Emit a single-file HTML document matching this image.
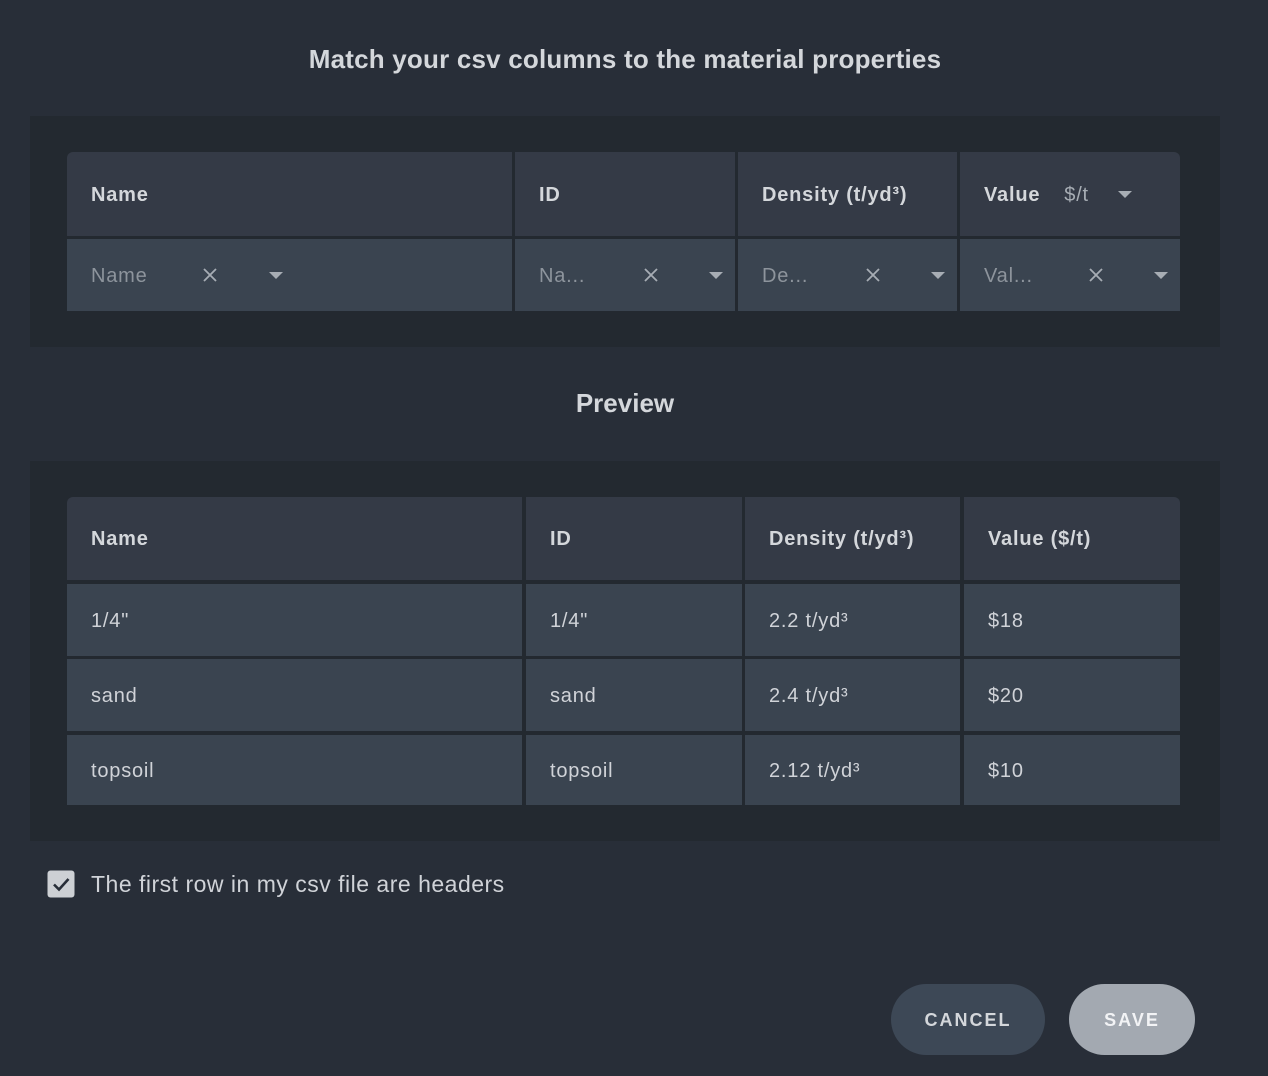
<!DOCTYPE html>
<html><head><meta charset="utf-8"><style>
*{margin:0;padding:0;box-sizing:border-box}
body{width:1268px;height:1076px;background:#282e38;font-family:"Liberation Sans",sans-serif;color:#d4d7db;position:relative;overflow:hidden}
.a{position:absolute}
.panel{position:absolute;left:30px;width:1190px;background:#232930}
.h{background:#343a46;font-weight:bold;font-size:20px;letter-spacing:.8px;color:#d4d7db;display:flex;align-items:center;padding-left:24px;padding-top:2px}
.c{background:#3a4450;font-size:20px;color:#d0d3d8;display:flex;align-items:center;padding-left:24px;letter-spacing:.8px;padding-top:2px}
.ph{color:#8d949c}
.x{position:absolute;width:16px;height:16px}
.tri{position:absolute;width:0;height:0;border-left:7px solid transparent;border-right:7px solid transparent;border-top:7px solid #a7adb4}
</style></head><body>
<div class="a" style="left:0;width:1250px;top:44px;text-align:center;font-size:26px;font-weight:bold;color:#d4d7db;letter-spacing:.2px">Match your csv columns to the material properties</div>
<div class="panel" style="top:116px;height:231px"></div>
<div class="a h" style="left:67px;top:152px;width:445px;height:84px;border-top-left-radius:6px">Name</div>
<div class="a h" style="left:515px;top:152px;width:220px;height:84px">ID</div>
<div class="a h" style="left:738px;top:152px;width:219px;height:84px">Density (t/yd³)</div>
<div class="a h" style="left:960px;top:152px;width:220px;height:84px;border-top-right-radius:6px">Value<span style="font-weight:normal;color:#a7adb4;margin-left:24px">$/t</span></div>
<div class="tri" style="left:1118px;top:191px"></div>
<div class="a c ph" style="left:67px;top:239px;width:445px;height:72px">Name</div>
<div class="a c ph" style="left:515px;top:239px;width:220px;height:72px">Na...</div>
<div class="a c ph" style="left:738px;top:239px;width:219px;height:72px">De...</div>
<div class="a c ph" style="left:960px;top:239px;width:220px;height:72px">Val...</div>
<svg class="x" style="left:202px;top:267px" viewBox="0 0 16 16"><path d="M2 2L14 14M14 2L2 14" stroke="#a7adb4" stroke-width="1.8"/></svg>
<svg class="x" style="left:643px;top:267px" viewBox="0 0 16 16"><path d="M2 2L14 14M14 2L2 14" stroke="#a7adb4" stroke-width="1.8"/></svg>
<svg class="x" style="left:865px;top:267px" viewBox="0 0 16 16"><path d="M2 2L14 14M14 2L2 14" stroke="#a7adb4" stroke-width="1.8"/></svg>
<svg class="x" style="left:1088px;top:267px" viewBox="0 0 16 16"><path d="M2 2L14 14M14 2L2 14" stroke="#a7adb4" stroke-width="1.8"/></svg>
<div class="tri" style="left:269px;top:272px"></div>
<div class="tri" style="left:709px;top:272px"></div>
<div class="tri" style="left:931px;top:272px"></div>
<div class="tri" style="left:1154px;top:272px"></div>

<div class="a" style="left:0;width:1250px;top:388px;text-align:center;font-size:26px;font-weight:bold;color:#d4d7db">Preview</div>
<div class="panel" style="top:461px;height:380px"></div>
<div class="a h" style="left:67px;top:497px;width:455px;height:83px;border-top-left-radius:6px">Name</div>
<div class="a h" style="left:526px;top:497px;width:216px;height:83px">ID</div>
<div class="a h" style="left:745px;top:497px;width:215px;height:83px">Density (t/yd³)</div>
<div class="a h" style="left:964px;top:497px;width:216px;height:83px;border-top-right-radius:6px">Value ($/t)</div>

<div class="a c" style="left:67px;top:584px;width:455px;height:72px">1/4"</div>
<div class="a c" style="left:526px;top:584px;width:216px;height:72px">1/4"</div>
<div class="a c" style="left:745px;top:584px;width:215px;height:72px">2.2 t/yd³</div>
<div class="a c" style="left:964px;top:584px;width:216px;height:72px">$18</div>
<div class="a c" style="left:67px;top:659px;width:455px;height:72px">sand</div>
<div class="a c" style="left:526px;top:659px;width:216px;height:72px">sand</div>
<div class="a c" style="left:745px;top:659px;width:215px;height:72px">2.4 t/yd³</div>
<div class="a c" style="left:964px;top:659px;width:216px;height:72px">$20</div>
<div class="a c" style="left:67px;top:735px;width:455px;height:70px">topsoil</div>
<div class="a c" style="left:526px;top:735px;width:216px;height:70px">topsoil</div>
<div class="a c" style="left:745px;top:735px;width:215px;height:70px">2.12 t/yd³</div>
<div class="a c" style="left:964px;top:735px;width:216px;height:70px">$10</div>

<svg class="a" style="left:47px;top:870px" width="28" height="28" viewBox="0 0 28 28"><rect x="0.5" y="0.5" width="27" height="27" rx="3" fill="#cdd0d4"/><path d="M7 14.5L12 19.5L21.5 9" stroke="#282e38" stroke-width="2.6" fill="none"/></svg>
<div class="a" style="left:91px;top:871px;font-size:23px;color:#d0d3d8;letter-spacing:.5px">The first row in my csv file are headers</div>

<div class="a" style="left:891px;top:984px;width:154px;height:71px;border-radius:36px;background:#3d4856;color:#d4d7db;font-weight:bold;font-size:18px;letter-spacing:2px;display:flex;align-items:center;justify-content:center;padding-top:2px">CANCEL</div>
<div class="a" style="left:1069px;top:984px;width:126px;height:71px;border-radius:36px;background:#a3a9b1;color:#f2f3f5;font-weight:bold;font-size:18px;letter-spacing:2px;display:flex;align-items:center;justify-content:center;padding-top:2px">SAVE</div>
</body></html>
